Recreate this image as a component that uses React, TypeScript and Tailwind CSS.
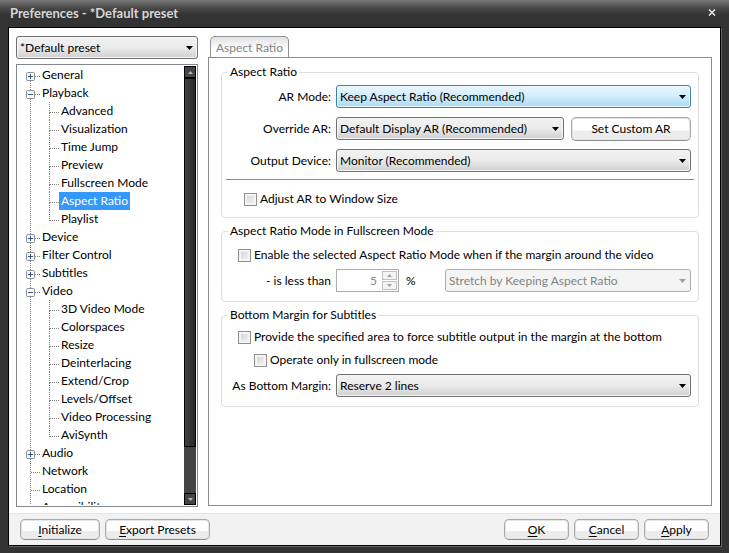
import { useId, useState } from 'react';
import type { ReactNode, SelectHTMLAttributes } from 'react';
import clsx from 'clsx';

interface TreeNode {
  label: string;
  expandable?: boolean;
  children?: string[];
}

const tree: TreeNode[] = [
  { label: 'General', expandable: true },
  {
    label: 'Playback',
    expandable: true,
    children: ['Advanced', 'Visualization', 'Time Jump', 'Preview', 'Fullscreen Mode', 'Aspect Ratio', 'Playlist'],
  },
  { label: 'Device', expandable: true },
  { label: 'Filter Control', expandable: true },
  { label: 'Subtitles', expandable: true },
  {
    label: 'Video',
    expandable: true,
    children: [
      '3D Video Mode',
      'Colorspaces',
      'Resize',
      'Deinterlacing',
      'Extend/Crop',
      'Levels/Offset',
      'Video Processing',
      'AviSynth',
    ],
  },
  { label: 'Audio', expandable: true },
  { label: 'Network' },
  { label: 'Location' },
  { label: 'Accessibility' },
];

function PushButton({ hotkey, children, className }: { hotkey?: string; children: ReactNode; className?: string }) {
  return (
    <button
      type="button"
      className={clsx(
        'rounded-[5px] border border-[#a9a9a9] border-b-[#8c8c8c] bg-linear-to-b from-white from-55% to-[#ececec] to-60% text-center whitespace-nowrap shadow-[inset_0_0_0_1px_#e4e4e4]',
        className,
      )}
    >
      {hotkey && <span className="underline underline-offset-2">{hotkey}</span>}
      {children}
    </button>
  );
}

interface DropdownProps extends SelectHTMLAttributes<HTMLSelectElement> {
  option: string;
  tone?: 'normal' | 'focused';
}

function Dropdown({ option, tone = 'normal', className, disabled, ...rest }: DropdownProps) {
  return (
    <div className={clsx('relative', className)}>
      <select
        disabled={disabled}
        className={clsx(
          'block h-[23px] w-full appearance-none rounded-[3px] border pr-5 pl-[3px] opacity-100 outline-none',
          disabled && 'border-[#adadad] bg-[#f4f4f4] text-[#838383]',
          !disabled && tone === 'normal' &&
            'border-[#707070] bg-linear-to-b from-[#f2f2f2] via-[#ebebeb] via-50% to-[#cfcfcf] shadow-[inset_0_0_0_1px_#f6f6f6]',
          !disabled && tone === 'focused' &&
            'border-[#3c7fb1] bg-linear-to-b from-[#eaf6fd] via-[#d2edfb] via-50% to-[#a7d9f5] shadow-[inset_0_0_0_1px_#eef8fd]',
        )}
        {...rest}
      >
        <option>{option}</option>
      </select>
      <svg
        viewBox="0 0 7 4"
        className={clsx('pointer-events-none absolute top-[10px] right-[5px] h-1 w-[7px]', disabled ? 'fill-[#a0a0a0]' : 'fill-black')}
        aria-hidden="true"
      >
        <path d="M0 0h7L3.5 4z" />
      </svg>
    </div>
  );
}

function Check({ label, className }: { label: string; className?: string }) {
  return (
    <label className={clsx('flex h-[18px] items-center gap-[3px] whitespace-nowrap', className)}>
      <input
        type="checkbox"
        className="size-[13px] shrink-0 appearance-none border border-[#8e8f8f] bg-linear-to-br from-[#cfd2d6] to-[#f6f6f6] shadow-[inset_0_0_0_2px_#f4f4f4] checked:from-[#3c7fb1]"
      />
      {label}
    </label>
  );
}

function Group({ title, className, children }: { title: string; className?: string; children: ReactNode }) {
  return (
    <fieldset className={clsx('min-w-0 rounded-[4px] border border-[#d9dfe3] pb-[9px]', className)}>
      <legend className="ml-[6px] px-[2px] leading-[18px]">{title}</legend>
      {children}
    </fieldset>
  );
}

function Field({ label, children }: { label: string; children: (id: string) => ReactNode }) {
  const id = useId();
  return (
    <div className="flex h-[23px] items-center gap-[5px] pr-[7px]">
      <label htmlFor={id} className="w-[109px] shrink-0 text-right whitespace-nowrap">
        {label}
      </label>
      {children(id)}
    </div>
  );
}

function Toggle({ open }: { open: boolean }) {
  return (
    <svg viewBox="0 0 9 9" className="mt-[6px] -ml-[5px] size-[9px] shrink-0" aria-hidden="true">
      <rect x="0.5" y="0.5" width="8" height="8" rx="1" fill="#f8f8f8" stroke="#8e8f8f" />
      <path d={open ? 'M2 4.5h5' : 'M2 4.5h5M4.5 2v5'} stroke="#33558f" />
    </svg>
  );
}

function CategoryTree() {
  const [selected, setSelected] = useState('Aspect Ratio');

  const item = (label: string) => (
    <button
      type="button"
      onClick={() => setSelected(label)}
      className={clsx('h-[18px] px-[2px] leading-[18px] whitespace-nowrap', selected === label && 'bg-[#3399ff] text-white')}
    >
      {label}
    </button>
  );

  return (
    <ul className="mt-[9px] ml-[12px] flex flex-col self-start border-l border-dotted border-[#808080]">
      {tree.map((node) => (
        <li key={node.label} className="first:-mt-[9px]">
          <div className="flex h-[18px] items-start">
            {node.expandable && <Toggle open={!!node.children} />}
            <span
              className={clsx(
                'mt-[10px] h-px shrink-0 border-t border-dotted border-[#808080]',
                node.expandable ? 'w-[5px]' : 'w-[9px]',
              )}
            />
            {item(node.label)}
          </div>
          {node.children && (
            <ul className="ml-[18px]">
              {node.children.map((child) => (
                <li key={child} className="group flex h-[18px]">
                  <span className="flex w-[10px] flex-col">
                    <span className="h-[11px] border-b border-l border-dotted border-[#808080]" />
                    <span className="flex-1 border-l border-dotted border-[#808080] group-last:border-l-0" />
                  </span>
                  {item(child)}
                </li>
              ))}
            </ul>
          )}
        </li>
      ))}
    </ul>
  );
}

function ScrollArrow({ up }: { up?: boolean }) {
  return (
    <button
      type="button"
      aria-label={up ? 'Scroll up' : 'Scroll down'}
      className="flex h-[12px] shrink-0 items-center justify-center border border-black bg-[#444]"
    >
      <svg viewBox="0 0 5 3" className="h-[3px] w-[5px] fill-[#b5b5b5]" aria-hidden="true">
        <path d={up ? 'M0 3h5L2.5 0z' : 'M0 0h5L2.5 3z'} />
      </svg>
    </button>
  );
}

function MarginSpinner({ id }: { id: string }) {
  return (
    <div className="flex h-[23px] w-[63px] shrink-0 border border-[#adadad] bg-white p-px">
      <input id={id} disabled defaultValue="5" className="w-0 flex-1 pr-[5px] text-right text-[#838383]" />
      <div className="flex w-[15px] flex-col gap-px">
        {['M0 3h5L2.5 0z', 'M0 0h5L2.5 3z'].map((d, i) => (
          <button
            key={d}
            type="button"
            disabled
            aria-label={i === 0 ? 'Increase' : 'Decrease'}
            className="flex flex-1 items-center justify-center border border-[#c0c0c0] bg-[#f4f4f4]"
          >
            <svg viewBox="0 0 5 3" className="h-[3px] w-[5px] fill-[#a0a0a0]" aria-hidden="true">
              <path d={d} />
            </svg>
          </button>
        ))}
      </div>
    </div>
  );
}

export default function App() {
  return (
    <div className="flex h-screen flex-col bg-[#333] px-2 pb-[7px] font-[Lato,'Open_Sans',sans-serif] text-[12px] leading-[18px] text-black">
      <header className="-mx-2 flex h-[27px] shrink-0 items-center justify-between bg-linear-to-b from-[#7a7a7a] via-[#484848] via-30% to-[#333] to-55% pr-[13px] pb-[2px] pl-[10px]">
        <h1 className="text-[13px] font-bold text-[#d6d6d6]">Preferences - *Default preset</h1>
        <button type="button" aria-label="Close">
          <svg viewBox="0 0 8 7" className="h-[7px] w-2 stroke-[#e2e2e2] stroke-[1.6]" aria-hidden="true">
            <path d="M1 0.5l6 6M7 0.5l-6 6" />
          </svg>
        </button>
      </header>

      <main className="flex min-h-0 flex-1 flex-col border border-black bg-white shadow-[1px_1px_0_#666]">
        <div className="flex min-h-0 flex-1 gap-[10px] px-[7px] pt-2 pb-[6px]">
          <aside className="flex w-[182px] shrink-0 flex-col gap-[5px]">
            <Dropdown option="*Default preset" aria-label="Preset" />
            <nav className="flex min-h-0 flex-1 border border-[#828790] p-px">
              <div className="flex flex-1 overflow-hidden">
                <CategoryTree />
              </div>
              <div className="flex w-[12px] shrink-0 flex-col bg-[#444]">
                <ScrollArrow up />
                <div className="h-[84%] border border-black bg-linear-to-r from-[#404040] to-[#2a2a2a]" />
                <div className="flex-1" />
                <ScrollArrow />
              </div>
            </nav>
          </aside>

          <section className="flex min-w-0 flex-1 flex-col pr-px pb-px">
            <div role="tablist" className="-mb-px flex pl-[2px]">
              <button
                type="button"
                role="tab"
                aria-selected="true"
                className="h-[22px] rounded-t-[5px] border border-b-0 border-[#8f9299] bg-linear-to-b from-[#e2e2e2] to-white to-60% px-[5px] text-[#838383]"
              >
                Aspect Ratio
              </button>
            </div>
            <div role="tabpanel" className="flex flex-1 flex-col gap-1 border border-[#898c95] px-3 pt-[5px]">
              <Group title="Aspect Ratio">
                <div className="flex flex-col gap-[9px] pt-1">
                  <Field label="AR Mode:">
                    {(id) => <Dropdown id={id} option="Keep Aspect Ratio (Recommended)" tone="focused" className="flex-1" />}
                  </Field>
                  <Field label="Override AR:">
                    {(id) => (
                      <>
                        <Dropdown id={id} option="Default Display AR (Recommended)" className="mr-[2px] flex-1" />
                        <PushButton className="h-6 w-[120px] shrink-0">Set Custom AR</PushButton>
                      </>
                    )}
                  </Field>
                  <Field label="Output Device:">
                    {(id) => <Dropdown id={id} option="Monitor (Recommended)" className="flex-1" />}
                  </Field>
                </div>
                <hr className="mx-1 mt-[7px] border-[#8f8f8f]" />
                <Check label="Adjust AR to Window Size" className="mt-[10px] ml-[22px]" />
              </Group>

              <Group title="Aspect Ratio Mode in Fullscreen Mode">
                <div className="flex flex-col gap-[5px] pt-[6px]">
                  <Check label="Enable the selected Aspect Ratio Mode when if the margin around the video" className="ml-4" />
                  <Field label="- is less than">
                    {(id) => (
                      <>
                        <MarginSpinner id={id} />
                        <span className="w-[36px] shrink-0 pl-[2px]">%</span>
                        <Dropdown option="Stretch by Keeping Aspect Ratio" aria-label="Fullscreen mode" disabled className="flex-1" />
                      </>
                    )}
                  </Field>
                </div>
              </Group>

              <Group title="Bottom Margin for Subtitles">
                <div className="flex flex-col gap-[5px] pt-1">
                  <Check label="Provide the specified area to force subtitle output in the margin at the bottom" className="ml-4" />
                  <Check label="Operate only in fullscreen mode" className="ml-8" />
                  <Field label="As Bottom Margin:">
                    {(id) => <Dropdown id={id} option="Reserve 2 lines" className="flex-1" />}
                  </Field>
                </div>
              </Group>
            </div>
          </section>
        </div>

        <footer className="flex h-[32px] shrink-0 items-center gap-[5px] border-t border-[#e4e4e4] bg-[#f2f2f2] px-[11px]">
          <PushButton hotkey="I" className="h-[21px] w-[80px]">nitialize</PushButton>
          <PushButton hotkey="E" className="mr-auto h-[21px] w-[105px]">xport Presets</PushButton>
          <PushButton hotkey="O" className="h-[21px] w-[65px]">K</PushButton>
          <PushButton hotkey="C" className="h-[21px] w-[65px]">ancel</PushButton>
          <PushButton hotkey="A" className="h-[21px] w-[65px]">pply</PushButton>
        </footer>
      </main>
    </div>
  );
}
